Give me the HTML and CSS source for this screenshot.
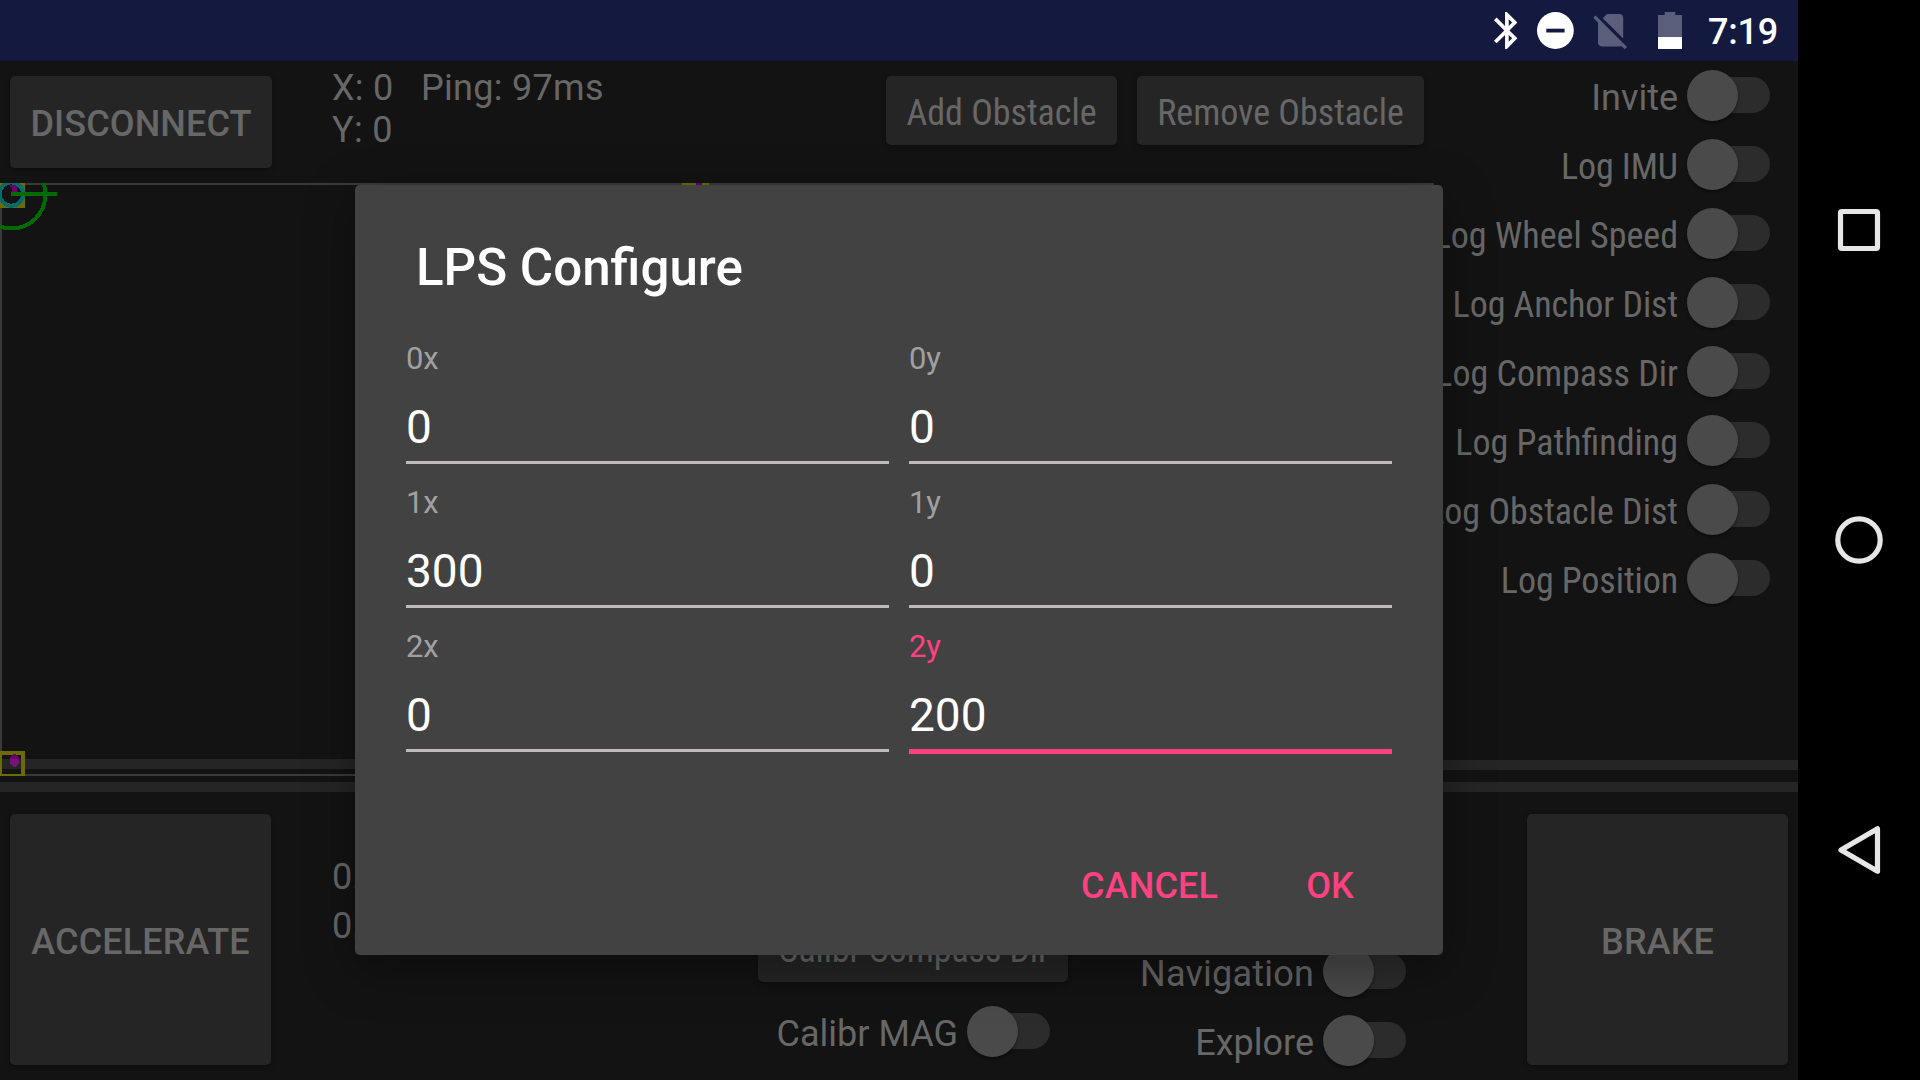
FILE: index.html
```html
<!DOCTYPE html>
<html lang="en">
<head>
<meta charset="utf-8">
<title>LPS Configure</title>
<link rel="stylesheet" href="styles.css">
</head>
<body>
<div class="screen">
  <div class="app">
    <header class="status">
      <svg class="status-icons" width="200" height="61" viewBox="1490 0 200 61">
        <g transform="translate(1484.8 8.4) scale(1.84)" fill="#fff">
          <path d="M17.71 7.71L12 2h-1v7.59L6.41 5 5 6.41 10.59 12 5 17.59 6.41 19 11 14.41V22h1l5.71-5.71-4.3-4.29 4.3-4.29zM13 5.83l1.88 1.88L13 9.59V5.83zm1.88 10.46L13 18.17v-3.76l1.88 1.88z"/>
        </g>
        <circle cx="1555.4" cy="30.5" r="18.4" fill="#fff"/>
        <rect x="1546.3" y="28.7" width="18.3" height="3.8" fill="#141940"/>
        <g transform="translate(1589 8.6) scale(1.8)" fill="#5b5e7b">
          <path d="M18.99 5c0-1.1-.89-2-1.99-2h-7L7.66 5.34 19 16.68 18.99 5zM3.65 3.88L2.38 5.15 5 7.77V19c0 1.1.9 2 2 2h10.01c.35 0 .67-.1.96-.26l1.88 1.88 1.27-1.27L3.65 3.88z"/>
        </g>
        <path fill="#5b5e7b" d="M1664.7 12h10.6v3h6.7v22h-24v-22h6.7z"/>
        <rect x="1658" y="37" width="24" height="12" fill="#fff"/>
      </svg>
      <span class="clock">7:19</span>
    </header>

    <main class="content">
      <section class="upper">
        <div class="field-area">
          <div class="toolbar">
            <button class="btn btn-disconnect">DISCONNECT</button>
            <div class="coords"><span>X: 0</span><span>Y: 0</span></div>
            <span class="ping">Ping: 97ms</span>
            <div class="obstacle-actions">
              <button class="btn btn-small btn-add"><span class="condensed">Add Obstacle</span></button>
              <button class="btn btn-small btn-remove"><span class="condensed">Remove Obstacle</span></button>
            </div>
          </div>
          <svg class="map" width="1434" height="593" viewBox="0 183 1434 593" shape-rendering="crispEdges">
            <rect x="1" y="184" width="1432" height="591" fill="none" stroke="#3a3a3a" stroke-width="2"/>
            <rect x="0" y="182.5" width="23" height="23.5" fill="#131313" stroke="#6b6b00" stroke-width="4"/>
            <rect x="0" y="753" width="23" height="23" fill="#131313" stroke="#6b6b00" stroke-width="4"/>
            <rect x="682" y="160" width="27" height="25" fill="#6b6b00"/>
            <rect x="696" y="183" width="6" height="2" fill="#6b006b"/>
            <ellipse cx="14.5" cy="760.5" rx="4.7" ry="6.5" fill="#6b006b"/>
            <circle cx="11.4" cy="194" r="11.7" fill="#131313" stroke="#006b6b" stroke-width="4"/>
            <path d="M10 185h6l1 2v5h-5v-3l-2-2z" fill="#6b006b"/>
            <circle cx="11.4" cy="194.5" r="34" fill="none" stroke="#006b00" stroke-width="4"/>
            <rect x="11" y="192" width="46" height="4" fill="#006b00"/>
            <path d="M2 759h19v10H2zM25 759h1409v10H25z" fill="#fff" fill-opacity=".077"/>
          </svg>
        </div>
        <div class="log-column">
          <div class="switch-row"><span class="label">Invite</span><span class="switch"></span></div>
          <div class="switch-row"><span class="label condensed tight">Log IMU</span><span class="switch"></span></div>
          <div class="switch-row"><span class="label condensed">Log Wheel Speed</span><span class="switch"></span></div>
          <div class="switch-row"><span class="label condensed tight">Log Anchor Dist</span><span class="switch"></span></div>
          <div class="switch-row"><span class="label condensed">Log Compass Dir</span><span class="switch"></span></div>
          <div class="switch-row"><span class="label condensed">Log Pathfinding</span><span class="switch"></span></div>
          <div class="switch-row"><span class="label condensed">Log Obstacle Dist</span><span class="switch"></span></div>
          <div class="switch-row"><span class="label condensed tight">Log Position</span><span class="switch"></span></div>
          <div class="bar bar-side"></div>
        </div>
      </section>
      <div class="bar"></div>
      <section class="lower">
        <button class="btn btn-pedal">ACCELERATE</button>
        <div class="readouts"><span>0.0</span><span>0.0</span></div>
        <div class="calibration">
          <button class="btn btn-small btn-compass"><span class="condensed">Calibr Compass Dir</span></button>
          <div class="switch-row"><span class="label">Calibr MAG</span><span class="switch"></span></div>
        </div>
        <div class="autonomy">
          <div class="switch-row"><span class="label label-navigation">Navigation</span><span class="switch"></span></div>
          <div class="switch-row"><span class="label">Explore</span><span class="switch"></span></div>
        </div>
        <button class="btn btn-pedal btn-brake">BRAKE</button>
      </section>
    </main>

    <div class="dialog">
      <h1 class="dialog-title">LPS Configure</h1>
      <div class="fields">
        <div class="field"><span class="field-label">0x</span><span class="field-value">0</span></div>
        <div class="field"><span class="field-label">0y</span><span class="field-value">0</span></div>
        <div class="field"><span class="field-label">1x</span><span class="field-value">300</span></div>
        <div class="field"><span class="field-label">1y</span><span class="field-value">0</span></div>
        <div class="field"><span class="field-label">2x</span><span class="field-value">0</span></div>
        <div class="field focused"><span class="field-label">2y</span><span class="field-value">200</span></div>
      </div>
      <div class="dialog-actions"><span>CANCEL</span><span>OK</span></div>
    </div>
  </div>

  <nav class="system-nav">
    <svg width="50" height="50" viewBox="0 0 50 50"><rect x="6.5" y="6.5" width="37" height="37" rx="1.5"/></svg>
    <svg width="50" height="50" viewBox="0 0 50 50"><circle cx="25" cy="25" r="21.2"/></svg>
    <svg width="50" height="50" viewBox="0 0 50 50"><path d="M43.5 3.8v42.4L7 25z"/></svg>
  </nav>
</div>
</body>
</html>
```
FILE: styles.css
```css
* { box-sizing: border-box; }

body {
  margin: 0;
  background: #000;
  font-family: Roboto, "Liberation Sans", sans-serif;
  font-size: 36px;
  line-height: 42px;
  color: #676767;
  overflow: hidden;
}

.screen { display: flex; width: 1920px; height: 1080px; }

.app {
  position: relative;
  display: flex;
  flex-direction: column;
  width: 1798px;
  background: #131313;
}

.status {
  display: flex;
  align-items: center;
  justify-content: flex-end;
  height: 61px;
  padding-right: 20px;
  background: #141940;
  color: #fff;
}
.status-icons { flex: none; }
.clock { width: 70px; margin-left: 18px; padding-top: 3px; font-weight: 500; letter-spacing: -.2px; white-space: nowrap; }

.content { flex: 1; display: flex; flex-direction: column; white-space: nowrap; }
.upper { display: flex; height: 715px; margin-bottom: 6px; }
.field-area { display: flex; flex-direction: column; width: 1434px; }
.map { display: block; }

.toolbar { display: flex; height: 122px; padding: 0 10px; align-items: flex-start; }
.coords { display: flex; flex-direction: column; width: 89px; margin: 6px 0 0 60px; letter-spacing: .3px; }
.ping { margin-top: 6px; letter-spacing: .3px; }
.obstacle-actions { display: flex; gap: 20px; margin: 15px 0 0 auto; }

.btn {
  display: flex;
  align-items: center;
  justify-content: center;
  margin: 0;
  padding: 0;
  border: 0;
  border-radius: 5px;
  background: #252525;
  box-shadow: 0 2px 5px rgba(0, 0, 0, .35);
  color: #676767;
  font: 500 36px/42px Roboto, "Liberation Sans", sans-serif;
  letter-spacing: .1px;
  white-space: nowrap;
}
.btn-disconnect { width: 262px; height: 92px; margin-top: 15px; padding-top: 4px; }
.btn-small { height: 69px; font-weight: 400; letter-spacing: 0; padding-top: 5px; }
.btn-add { width: 231px; }
.btn-remove { width: 287px; }
.btn-compass { width: 310px; padding-left: 1px; letter-spacing: -.1px; }
.btn-pedal { width: 261px; height: 251px; padding-top: 5px; }

.condensed { font-family: "Roboto Condensed", Roboto, sans-serif; font-stretch: 75%; }
.tight { letter-spacing: -.08px; }

.log-column { position: relative; display: flex; flex-direction: column; width: 364px; padding-right: 28px; }
.switch-row { display: flex; align-items: center; justify-content: flex-end; height: 69px; }
.label { padding-top: 4px; }
.label-navigation { letter-spacing: .2px; }

.switch {
  position: relative;
  flex: none;
  width: 83px;
  height: 51px;
  margin-left: 9px;
}
.switch::before {
  content: "";
  position: absolute;
  inset: 7px 0 8px 14px;
  border-radius: 18px;
  background: #2c2c2c;
}
.switch::after {
  content: "";
  position: absolute;
  left: 0;
  top: 0;
  width: 51px;
  height: 51px;
  border-radius: 50%;
  background: #4a4a4a;
  box-shadow: 0 2px 3px rgba(0, 0, 0, .4);
}

.bar { height: 10px; background: #252525; }
.bar-side { margin: auto -28px 6px 0; }

.lower { display: flex; padding: 22px 10px 15px; }
.readouts { display: flex; flex-direction: column; gap: 7px; width: 425px; padding: 42px 0 0 61px; }
.calibration { display: flex; flex-direction: column; margin-left: 62px; padding-top: 99px; width: 310px; }
.calibration .switch-row { margin: 15px 18px 0 0; }
.autonomy { width: 338px; padding-top: 123px; }
.btn-brake { margin-left: auto; }

.dialog {
  position: absolute;
  left: 355px;
  top: 185px;
  width: 1088px;
  height: 770px;
  padding: 53px 51px 0;
  border-radius: 5px;
  background: #424242;
  box-shadow: 0 14px 50px rgba(0, 0, 0, .35);
  white-space: nowrap;
}
.dialog-title { margin: 0 0 0 10px; font-size: 51.1px; font-weight: 500; line-height: 60px; color: #fff; }
.fields { display: grid; grid-template-columns: 483px 483px; gap: 0 20px; grid-auto-rows: 144px; margin-top: 40px; }
.field { display: flex; flex-direction: column; }
.field-label { font-size: 31px; line-height: 42px; letter-spacing: -.2px; color: #a0a0a0; }
.field-value {
  height: 84px;
  padding-top: 20px;
  border-bottom: 3px solid #bdbbbc;
  font-size: 46px;
  line-height: 54px;
  color: #fff;
}
.focused .field-label { color: #ff4081; }
.focused .field-value { height: 86px; border-bottom: 5px solid #ff4081; }

.dialog-actions {
  display: flex;
  justify-content: flex-end;
  gap: 88px;
  margin-top: 95px;
  padding-right: 38px;
  font-weight: 500;
  letter-spacing: .15px;
  color: #ff4081;
}

.system-nav {
  display: flex;
  flex-direction: column;
  justify-content: space-between;
  align-items: center;
  width: 122px;
  padding: 205px 0;
}
.system-nav svg { fill: none; stroke: #e6e6e6; stroke-width: 5.2; stroke-linejoin: round; }
```
